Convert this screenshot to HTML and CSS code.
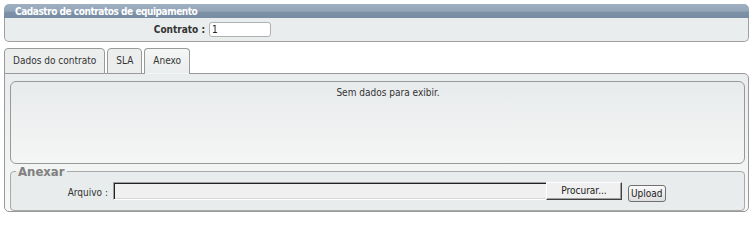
FILE: index.html
```html
<!DOCTYPE html>
<html lang="pt">
<head>
<meta charset="utf-8">
<title>Cadastro de contratos de equipamento</title>
<link rel="stylesheet" href="styles.css">
</head>
<body>
<div class="window">
  <div class="title">Cadastro de contratos de equipamento</div>
  <div class="form-row">
    <label class="lbl" for="contrato">Contrato :</label>
    <input class="txt" id="contrato" type="text" value="1">
  </div>
</div>
<div class="tabs">
  <div class="tabbar">
    <span class="tab">Dados do contrato</span>
    <span class="tab">SLA</span>
    <span class="tab active">Anexo</span>
  </div>
  <div class="panel">
    <div class="grid"><div class="empty">Sem dados para exibir.</div></div>
    <fieldset class="anexar">
      <legend>Anexar</legend>
      <div class="file-row">
        <label class="file-lbl">Arquivo :</label>
        <span class="file"><span class="file-text"></span><span class="file-btn">Procurar...</span></span>
        <button class="btn" type="button">Upload</button>
      </div>
    </fieldset>
  </div>
</div>
</body>
</html>
```
FILE: styles.css
```css
body {
  margin: 4px;
  background: #fff;
  color: #333;
  font-family: "DejaVu Sans Condensed", "DejaVu Sans", sans-serif;
  font-stretch: condensed;
  font-size: 10px;
}

.title {
  height: 14px;
  line-height: 15px;
  padding-left: 11px;
  border-radius: 5px 5px 0 0;
  background: linear-gradient(#9eafc0 0%, #94a7b9 50%, #7d91a7 58%, #778ba2 100%);
  color: #fff;
  font-weight: bold;
  letter-spacing: -0.45px;
}

.form-row {
  height: 23px;
  border: 1px solid #a0a0a0;
  border-top: none;
  border-radius: 0 0 5px 5px;
  background: #eaeded;
  display: grid;
  grid-template-columns: 200px auto;
  column-gap: 4px;
  align-items: center;
  justify-content: start;
}

.lbl {
  text-align: right;
  font-weight: bold;
  color: #333;
}

.txt {
  box-sizing: border-box;
  width: 62px;
  height: 15px;
  margin: 0;
  padding: 0 2px;
  border: 1px solid #b0b0b0;
  border-radius: 3px;
  background: #fff;
  font: inherit;
  color: #222;
}

.tabs {
  margin-top: 6px;
}

.tabbar {
  display: flex;
  gap: 2px;
  margin-bottom: -1px;
}

.tab {
  height: 24px;
  line-height: 23px;
  padding: 0 8px;
  border: 1px solid #999;
  border-radius: 4px 4px 0 0;
  background: #eceeee;
  color: #333;
}

.tab.active {
  border-bottom-color: transparent;
  background: linear-gradient(#f5f6f6, #eaeded);
}

.panel {
  border: 1px solid #999;
  border-radius: 0 5px 5px 5px;
  background: linear-gradient(#eaeded, #f7f8f8);
  padding: 7px 3px 0 5px;
}

.grid {
  height: 81px;
  border: 1px solid #999;
  border-radius: 6px;
  background: linear-gradient(#e8ebec, #f4f5f5);
}

.empty {
  padding-top: 5px;
  padding-left: 21px;
  text-align: center;
  color: #333;
}

.anexar {
  margin: 0;
  padding: 0 0 8px 5px;
  border: 1px solid #aaa;
  border-radius: 4px;
  background: #e9ecec;
  min-width: 0;
}

.anexar legend {
  padding: 0 2px;
  font-size: 13px;
  font-weight: bold;
  color: #808080;
}

.file-row {
  display: flex;
  align-items: flex-start;
  padding-top: 3px;
  margin-left: -5px;
}

.file-lbl {
  width: 97px;
  text-align: right;
  margin-top: 5px;
  color: #333;
}

.file {
  display: flex;
  margin-left: 5px;
}

.file-text {
  box-sizing: border-box;
  width: 433px;
  height: 18px;
  border-top: 1px solid #a0a0a0;
  border-left: 1px solid #a0a0a0;
  border-bottom: 1px solid #fff;
  box-shadow: inset 1px 1px 0 #222, inset 0 -1px 0 #d8d8d8;
  background: #f0f0f0;
}

.file-btn {
  box-sizing: border-box;
  width: 76px;
  height: 18px;
  line-height: 15px;
  text-align: center;
  border-top: 1px solid #fff;
  border-left: 1px solid #fff;
  border-right: 1px solid #404040;
  border-bottom: 1px solid #404040;
  box-shadow: inset -1px -1px 0 #a0a0a0;
  background: #f0f0f0;
  color: #222;
}

.btn {
  box-sizing: border-box;
  height: 17px;
  margin: 3px 0 0 6px;
  padding: 0 2px;
  border: 1px solid #707070;
  border-radius: 3px;
  background: linear-gradient(#fafafa, #dedede);
  font: inherit;
  color: #222;
  line-height: 13px;
}
```
